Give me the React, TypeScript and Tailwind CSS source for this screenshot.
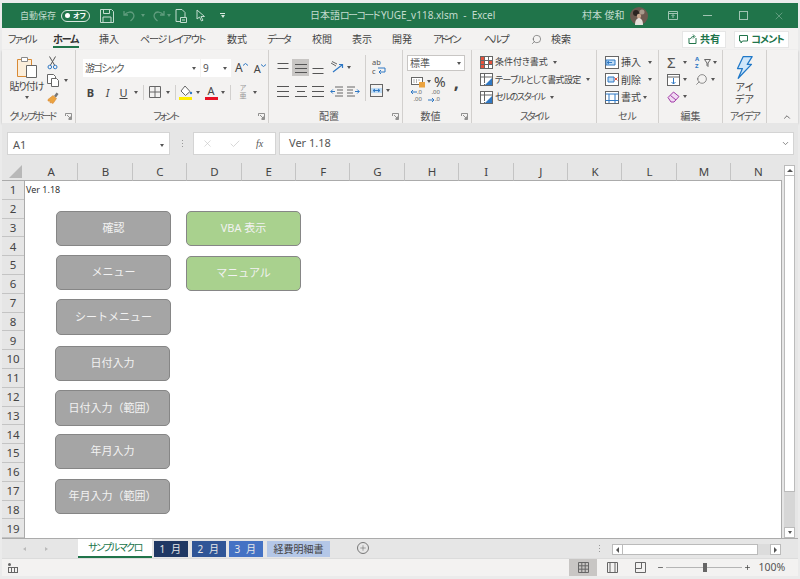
import { ChevronDown, ChevronUp, Minus, Plus, Search, X, Check } from 'lucide-react';
import type { ReactNode } from 'react';

function Caret({ className = '' }: { className?: string }) {
  return <span className={`inline-block h-0 w-0 shrink-0 border-x-[2.5px] border-t-[3px] border-x-transparent border-t-[#555] ${className}`} />;
}

function Launcher() {
  return (
    <svg width="7" height="7" viewBox="0 0 7 7" fill="none" stroke="#777" strokeWidth="0.8" className="absolute bottom-[3px] right-[3px]">
      <path d="M0.5 3V0.5H6.5V6.5H3.5M2 2 5.5 5.5M5.5 3.5V5.5H3.5" />
    </svg>
  );
}

function Group({ width, label, labelCls = '', launcher, children }: { width: string; label: string; labelCls?: string; launcher?: boolean; children: ReactNode }) {
  return (
    <div className={`relative flex h-full shrink-0 flex-col border-r border-[#d2d0ce] ${width}`}>
      <div className="relative min-h-0 flex-1">{children}</div>
      <div className={`h-[13px] whitespace-nowrap text-center text-[10px] leading-[13px] text-[#555] ${launcher ? 'pr-[13px]' : ''} ${labelCls}`}>{label}</div>
      {launcher && <Launcher />}
    </div>
  );
}

function Lines({ rows }: { rows: [number, number][] }) {
  return (
    <svg width="16" height="14" viewBox="0 0 16 14" stroke="#555" strokeWidth="1">
      {rows.map(([y, w], i) => (
        <line key={i} x1={(16 - w) / 2} x2={(16 + w) / 2} y1={y + 0.5} y2={y + 0.5} />
      ))}
    </svg>
  );
}

function Paste() {
  return (
    <svg width="22" height="22" viewBox="0 0 22 22" fill="none">
      <path d="M1.5 3.5h14v17h-14z" fill="#fbeedb" stroke="#d98a35" />
      <path d="M5.5 1.5h6v4h-6z" fill="#fff" stroke="#8a8a8a" />
      <path d="M10.5 9.5h10v12h-10z" fill="#fff" stroke="#666" />
    </svg>
  );
}

function Scissors() {
  return (
    <svg width="11" height="14" viewBox="0 0 11 14" fill="none" stroke="#555" strokeWidth="1">
      <path d="M2.5 0.5 7.5 9M8.5 0.5 3.5 9" />
      <circle cx="2.8" cy="11" r="1.8" stroke="#2f78c4" />
      <circle cx="8.2" cy="11" r="1.8" stroke="#2f78c4" />
    </svg>
  );
}

function CopyIcon() {
  return (
    <svg width="13" height="13" viewBox="0 0 13 13" fill="#fff" stroke="#666">
      <path d="M0.5 0.5h6l2 2v7h-8z" />
      <path d="M4.5 4.5h5l2 2v6h-7z" />
    </svg>
  );
}

function Brush() {
  return (
    <svg width="13" height="13" viewBox="0 0 13 13" fill="none">
      <path d="M7 5 9.5 1.5 11.5 3 9 6.5z" fill="#777" />
      <path d="M1 8.5 6 4.5l3.5 3-3.5 5-2-1-1 .5.3-1.8L1 10z" fill="#eba33f" stroke="#d98a35" strokeWidth="0.6" />
    </svg>
  );
}

function Fill() {
  return (
    <svg width="14" height="15" viewBox="0 0 14 15" fill="none">
      <path d="M6 1 11 6.5 6.5 10.5 2 6z" fill="#fff" stroke="#666" />
      <circle cx="12" cy="8" r="1.2" fill="#2f78c4" />
      <rect x="0" y="12" width="13" height="3" fill="#ffee00" />
    </svg>
  );
}

function FontColor() {
  return (
    <div className="flex h-[15px] w-[14px] flex-col items-center">
      <span className="h-[12px] text-[11px] leading-[12px] text-[#444]">A</span>
      <span className="mt-[0.5px] h-[3px] w-[13px] shrink-0 bg-[#e81123]" />
    </div>
  );
}

function BorderIcon() {
  return (
    <svg width="12" height="12" viewBox="0 0 12 12" fill="none" stroke="#666">
      <path d="M0.5 0.5h11v11h-11zM6 0.5v11M0.5 6h11" />
    </svg>
  );
}

function Orient() {
  return (
    <svg width="14" height="13" viewBox="0 0 14 13" fill="none" strokeWidth="1">
      <path d="M1 2 6 5M2 0.5 7 3" stroke="#666" />
      <path d="M3 11 12 4M9 3.5h3.5V7" stroke="#2f78c4" strokeWidth="1.2" />
    </svg>
  );
}

function Indent({ flip }: { flip?: boolean }) {
  return (
    <svg width="13" height="11" viewBox="0 0 13 11" fill="none" strokeWidth="1" className={flip ? '-scale-x-100' : ''}>
      <path d="M5 1h8M7 4h6M7 7h6M5 10h8" stroke="#666" />
      <path d="M5 5.5H0.8M2.8 3.5 0.8 5.5l2 2" stroke="#2f78c4" />
    </svg>
  );
}

function Wrap() {
  return (
    <div className="relative flex h-[18px] w-[15px] flex-col text-[7.5px] leading-[9px] text-[#555]">
      <span>ab</span>
      <span>c</span>
      <svg width="10" height="8" viewBox="0 0 10 8" fill="none" stroke="#2f78c4" className="absolute bottom-[1px] right-0">
        <path d="M1 1h7v4H2M4 3 2 5l2 2" />
      </svg>
    </div>
  );
}

function Merge() {
  return (
    <svg width="13" height="13" viewBox="0 0 13 13" fill="none">
      <rect x="0.5" y="0.5" width="12" height="12" stroke="#666" />
      <rect x="1" y="4" width="11" height="5" fill="#bfdcf5" />
      <path d="M3 6.5h7M5 5 3 6.5 5 8M8 5l2 1.5L8 8" stroke="#2f78c4" />
    </svg>
  );
}

function Accounting() {
  return (
    <svg width="15" height="12" viewBox="0 0 15 12" fill="none">
      <rect x="0.5" y="1.5" width="11" height="7" fill="#fff" stroke="#666" />
      <path d="M2.5 4h1M5 4h1M7.5 4h1M2.5 6h1M5 6h1" stroke="#666" />
      <rect x="8" y="6" width="6" height="5.5" fill="#eba33f" />
    </svg>
  );
}

function Decimal({ flip }: { flip?: boolean }) {
  return (
    <div className="relative h-[14px] w-[12px] text-right text-[6px] leading-[7px] text-[#666]">
      <div>{flip ? '.00' : '.0'}</div>
      <div>{flip ? '.0' : '.00'}</div>
      <svg width="7" height="6" viewBox="0 0 7 6" fill="none" stroke="#2f78c4" className={`absolute left-0 ${flip ? 'bottom-0' : 'top-0'}`}>
        <path d={flip ? 'M0 3h6M4 1l2 2-2 2' : 'M7 3H1M3 1 1 3l2 2'} />
      </svg>
    </div>
  );
}

function StyleIcon({ kind }: { kind: number }) {
  return (
    <svg width="13" height="13" viewBox="0 0 13 13" fill="none" className="shrink-0">
      <rect x="0.5" y="0.5" width="12" height="12" fill="#fff" stroke="#666" />
      {kind === 0 && (
        <g>
          <rect x="1" y="1" width="3.5" height="11" fill="#e5533d" />
          <rect x="8" y="4" width="4" height="4" fill="#e5533d" />
          <path d="M0.5 4.5h12M0.5 8.5h12M4.5 0.5v12M8.5 0.5v12" stroke="#666" />
        </g>
      )}
      {kind > 0 && (
        <g>
          <path d="M0.5 4h12M4.5 0.5v12" stroke="#666" />
          <path d="M5 12 12 5v7z" fill="#2f78c4" />
          <path d="M4 11 10 5" stroke="#fff" />
        </g>
      )}
    </svg>
  );
}

function CellIcon({ kind }: { kind: number }) {
  return (
    <svg width="14" height="13" viewBox="0 0 14 13" fill="none" className="shrink-0">
      <rect x="0.5" y="0.5" width="13" height="12" fill="#fff" stroke="#666" />
      {kind === 0 && <path d="M1 4h9v5H1z" fill="#bfdcf5" stroke="#2f78c4" />}
      {kind === 0 && <path d="M7 6.5H2M4 5 2 6.5 4 8" stroke="#2f78c4" />}
      {kind === 1 && <path d="M3 4h6v5H3z" fill="#bfdcf5" stroke="#2f78c4" />}
      {kind === 1 && <path d="M9.5 4.5l3 3M12.5 4.5l-3 3" stroke="#e5533d" />}
      {kind === 2 && <path d="M0.5 3h13M0.5 9.5h13M4 3v9M10 3v9" stroke="#2f78c4" />}
    </svg>
  );
}

function Bolt() {
  return (
    <svg width="17" height="23" viewBox="0 0 24 33" fill="none">
      <path d="M10 1h13l-7 11h6L3 32l6-14H2z" fill="#cfe6f9" stroke="#1f78c8" strokeWidth="1.8" strokeLinejoin="round" />
    </svg>
  );
}

function GrowShrink({ down, size }: { down?: boolean; size: string }) {
  return (
    <span className={`flex items-start text-[#444] ${size}`}>
      <span className="leading-none">A</span>
      <svg width="5" height="3" viewBox="0 0 5 3" fill="none" stroke="#2f78c4" className="mt-[1px]">
        <path d={down ? 'M0 0.5l2.5 2 2.5-2' : 'M0 2.5l2.5-2 2.5 2'} />
      </svg>
    </span>
  );
}

function Combo({ width, children }: { width: string; children: ReactNode }) {
  return (
    <div className={`flex h-[18px] items-center justify-between bg-white pl-[2px] pr-[4px] text-[10px] text-[#555] ${width}`}>
      <span>{children}</span>
      <Caret />
    </div>
  );
}

function TitleBar() {
  return (
    <div className="flex h-[25px] shrink-0 items-center bg-[#20744a] text-[10px] text-[#c3dccf]">
      <span className="ml-[18px] w-[41px] whitespace-nowrap text-[9px]">自動保存</span>
      <div className="flex h-[12px] w-[29px] items-center rounded-full border border-[#d8e8df] px-[3px]">
        <span className="h-[5px] w-[5px] rounded-full bg-white" />
        <span className="ml-[3px] whitespace-nowrap text-[7px] font-bold leading-none text-white">オフ</span>
      </div>
      <svg width="14" height="14" viewBox="0 0 14 14" fill="none" stroke="#c3dccf" className="ml-[10px]">
        <path d="M0.5 0.5h11l2 2v11h-13zM3.5 0.5v4h6v-4M3 13.5V8h8v5.5" />
      </svg>
      <svg width="16" height="12" viewBox="0 0 16 12" fill="none" stroke="#5f9c7d" strokeWidth="1.3" className="ml-[9px]">
        <path d="M1 1v4h4M1.5 5C4 1.5 9 1 10.5 4c1.3 2.5-.5 5-3 7" />
      </svg>
      <Caret className="ml-[2px] !border-t-[#5f9c7d]" />
      <svg width="16" height="12" viewBox="0 0 16 12" fill="none" stroke="#5f9c7d" strokeWidth="1.3" className="ml-[4px]">
        <path d="M15 1v4h-4M14.5 5C12 1.5 7 1 5.5 4c-1.3 2.5.5 5 3 7" />
      </svg>
      <Caret className="ml-[2px] !border-t-[#5f9c7d]" />
      <svg width="12" height="14" viewBox="0 0 12 14" fill="none" stroke="#c3dccf" className="ml-[4px]">
        <path d="M1 .5h6l3 3v5M1 .5v12h4M7 8.5h4.5v5H5.5v-5zM7 11h3" />
      </svg>
      <svg width="10" height="13" viewBox="0 0 10 13" fill="none" stroke="#c3dccf" className="ml-[9px]">
        <path d="M1 1v9l2.5-2 2 4 1.5-.8-2-3.700h3.500z" />
      </svg>
      <div className="ml-[14px] flex w-[5px] flex-col items-center gap-[1px]">
        <span className="h-[1px] w-[5px] bg-[#d8e8df]" />
        <Caret className="!border-t-[#d8e8df]" />
      </div>
      <span className="ml-[85px] w-[272px] whitespace-nowrap">
        <span>日本語</span>
        <span className="tracking-[-1.6px]">ローコード</span>
        <span className="ml-[2px]">YUGE_v118.xlsm&nbsp; -&nbsp; Excel</span>
      </span>
      <span className="w-[48px] whitespace-nowrap">村本 俊和</span>
      <svg width="18" height="18" viewBox="0 0 18 18" className="shrink-0">
        <circle cx="9" cy="9" r="9" fill="#6b5a4f" />
        <circle cx="6" cy="6" r="3" fill="#2b2420" />
        <circle cx="12" cy="5" r="2.5" fill="#a89a8b" />
        <path d="M5 18c0-5 2-7 4-7s4 2 4 7z" fill="#e4e0da" />
        <circle cx="9" cy="9" r="2.2" fill="#c7a58d" />
      </svg>
      <svg width="10" height="9" viewBox="0 0 10 9" fill="none" stroke="#a0c4b2" className="ml-[20px]">
        <path d="M.5 .5h9v8h-9zM.5 2.5h9M5 7V4M3.5 5 5 3.5 6.5 5" />
      </svg>
      <span className="ml-[25px] h-[1px] w-[9px] bg-[#a0c4b2]" />
      <span className="ml-[27px] h-[9px] w-[9px] border border-[#a0c4b2]" />
      <X size={12} strokeWidth={1} className="ml-[25px] text-[#a0c4b2]" />
    </div>
  );
}

const tabs = [
  { label: 'ファイル', cls: 'w-[45px] tracking-[-1.7px]' },
  { label: 'ホーム', cls: 'w-[46px] font-bold text-[#333] tracking-[-1px]' },
  { label: '挿入', cls: 'w-[41px]' },
  { label: 'ページ レイアウト', cls: 'w-[87px] tracking-[-1.2px]' },
  { label: '数式', cls: 'w-[40px]' },
  { label: 'データ', cls: 'w-[45px] tracking-[-1.6px]' },
  { label: '校閲', cls: 'w-[40px]' },
  { label: '表示', cls: 'w-[40px]' },
  { label: '開発', cls: 'w-[41px]' },
  { label: 'アドイン', cls: 'w-[51px] tracking-[-2.2px]' },
  { label: 'ヘルプ', cls: 'w-[47px] tracking-[-1.6px]' },
];

function TabRow() {
  return (
    <div className="flex h-[22px] shrink-0 items-center bg-[#f3f2f1] pl-[6px] text-[10px] text-[#444]">
      {tabs.map((t) => (
        <div key={t.label} className={`relative flex h-full items-center whitespace-nowrap ${t.cls}`}>
          {t.label}
          {t.label === 'ホーム' && <span className="absolute bottom-[2px] left-0 h-[2px] w-[26px] bg-[#20744a]" />}
        </div>
      ))}
      <Search size={11} strokeWidth={1.3} className="-scale-x-100 text-[#555]" />
      <span className="ml-[9px] w-[20px]">検索</span>
      <div className="ml-[111px] flex h-[17px] w-[44px] items-center justify-center gap-[3px] border border-[#e6e6e6] bg-white font-bold text-[#20744a]">
        <svg width="9" height="10" viewBox="0 0 9 10" fill="none" stroke="#666">
          <path d="M1 4v5.5h7V4M2.5 5C3 3 4.5 2.5 6 2.5M5 .5l2 2-2 2" stroke="#20744a" />
        </svg>
        共有
      </div>
      <div className="ml-[8px] flex h-[17px] w-[55px] items-center justify-center gap-[3px] border border-[#e6e6e6] bg-white font-bold tracking-[-1px] text-[#20744a]">
        <svg width="9" height="9" viewBox="0 0 9 9" fill="none" stroke="#20744a">
          <path d="M.5 .5h8v5.5h-5l-1.5 2V6h-1.5z" />
        </svg>
        コメント
      </div>
    </div>
  );
}

const styleItems = [
  { label: '条件付き書式', cls: 'text-[9px]' },
  { label: 'テーブルとして書式設定', cls: 'text-[9px] tracking-[-0.6px]' },
  { label: 'セルのスタイル', cls: 'text-[9px] tracking-[-1.2px]' },
];

function Ribbon() {
  return (
    <div className="flex h-[73px] shrink-0 bg-[#f3f2f1] text-[#555] shadow-[0_1px_2px_#bbb]">
      <Group width="w-[74px]" label="クリップボード" labelCls="tracking-[-2.3px]" launcher>
        <div className="flex">
          <div className="ml-[4px] flex w-[41px] flex-col items-center pt-[6px]">
            <Paste />
            <span className="mt-[2px] whitespace-nowrap text-[10px] leading-[12px] tracking-[-1px] text-[#444]">貼り付け</span>
            <Caret className="mt-[4px]" />
          </div>
          <div className="flex flex-col gap-[4px] pt-[6px]">
            <Scissors />
            <div className="flex items-center gap-[4px]">
              <CopyIcon />
              <Caret />
            </div>
            <Brush />
          </div>
        </div>
      </Group>

      <Group width="w-[193px]" label="フォント" labelCls="tracking-[-2px]" launcher>
        <div className="flex items-center pl-[7px] pt-[9px]">
          <Combo width="w-[117px] tracking-[-1.5px]">游ゴシック</Combo>
          <Combo width="ml-[1px] w-[30px]">9</Combo>
          <span className="ml-[4px]"><GrowShrink size="text-[12px]" /></span>
          <span className="ml-[6px]"><GrowShrink down size="text-[11px]" /></span>
        </div>
        <div className="flex items-center pl-[6px] pt-[7px] text-[11px] leading-none text-[#444]">
          <span className="w-[17px] text-center font-bold">B</span>
          <span className="w-[17px] text-center italic">I</span>
          <span className="w-[15px] text-center underline">U</span>
          <Caret className="ml-[3px]" />
          <span className="mx-[5px] h-[15px] w-px bg-[#d2d0ce]" />
          <BorderIcon />
          <Caret className="ml-[5px]" />
          <span className="ml-[5px] mr-[3px] h-[15px] w-px bg-[#d2d0ce]" />
          <Fill />
          <Caret className="ml-[3px]" />
          <span className="w-[4px]" />
          <FontColor />
          <Caret className="ml-[3px]" />
          <span className="mx-[5px] h-[15px] w-px bg-[#d2d0ce]" />
          <span className="flex w-[14px] flex-col items-center text-[7px] leading-[8px] text-[#999]">
            <span>ア</span>
            <span>亜</span>
          </span>
          <Caret className="ml-[3px]" />
        </div>
      </Group>

      <Group width="w-[134px]" label="配置" launcher>
        <div className="flex h-full pl-[5px]">
          <div className="w-[91px]">
            <div className="flex items-center pt-[9px]">
              <span className="flex h-[17px] w-[18px] items-center justify-center"><Lines rows={[[2, 11], [7, 11]]} /></span>
              <span className="flex h-[17px] w-[17px] items-center justify-center bg-[#c8c6c4]"><Lines rows={[[3, 12], [7, 12], [11, 12]]} /></span>
              <span className="flex h-[17px] w-[18px] items-center justify-center"><Lines rows={[[7, 11], [12, 11]]} /></span>
              <span className="ml-[3px] flex items-center gap-[3px]"><Orient /><Caret /></span>
            </div>
            <div className="mt-[8px] flex h-[14px] items-center">
              <span className="flex w-[18px] justify-center"><Lines rows={[[2, 12], [7, 12], [12, 12]]} /></span>
              <span className="flex w-[17px] justify-center"><Lines rows={[[2, 12], [7, 8], [12, 12]]} /></span>
              <span className="flex w-[18px] justify-center"><Lines rows={[[2, 12], [7, 12], [12, 12]]} /></span>
              <span className="ml-[3px]"><Indent /></span>
              <span className="ml-[4px]"><Indent flip /></span>
            </div>
          </div>
          <span className="mt-[5px] h-[46px] w-px bg-[#d2d0ce]" />
          <div className="pl-[4px] pt-[8px]">
            <span className="ml-[2px] block"><Wrap /></span>
            <span className="mt-[8px] flex items-center gap-[3px]"><Merge /><Caret /></span>
          </div>
        </div>
      </Group>

      <Group width="w-[69px]" label="数値" launcher>
        <div className="pl-[4px] pt-[5px]">
          <div className="flex h-[16px] w-[58px] items-center justify-between border border-[#c8c6c4] bg-white pl-[2px] pr-[3px] text-[10px]">
            標準
            <Caret />
          </div>
          <div className="flex h-[18px] items-center pl-[4px] pt-[3px]">
            <Accounting />
            <Caret className="ml-[1px]" />
            <span className="ml-[3px] text-[14px] leading-[18px] text-[#444]">%</span>
            <span className="ml-[8px] text-[18px] font-bold leading-[14px] text-[#444]">,</span>
          </div>
          <div className="flex gap-[6px] pl-[3px]">
            <Decimal />
            <Decimal flip />
          </div>
        </div>
      </Group>

      <Group width="w-[125px]" label="スタイル" labelCls="tracking-[-2px]">
        <div className="flex flex-col gap-[3.5px] pl-[8px] pt-[5px] leading-[14px] text-[#444]">
          {styleItems.map((s, i) => (
            <div key={s.label} className={`flex items-center gap-[2px] whitespace-nowrap ${s.cls}`}>
              <StyleIcon kind={i} />
              {s.label}
              <Caret className="ml-[3px]" />
            </div>
          ))}
        </div>
      </Group>

      <Group width="w-[62px]" label="セル">
        <div className="flex flex-col gap-[3.5px] pl-[8px] pt-[5px] text-[10px] leading-[14px] text-[#444]">
          {['挿入', '削除', '書式'].map((s, i) => (
            <div key={s} className="flex items-center gap-[2px]">
              <CellIcon kind={i} />
              {s}
              <Caret className={i === 2 ? 'ml-0' : 'ml-[5px]'} />
            </div>
          ))}
        </div>
      </Group>

      <Group width="w-[64px]" label="編集">
        <div className="grid grid-cols-[28px_30px] gap-y-[4px] pl-[8px] pt-[6px] text-[#555]">
          <div className="flex h-[13px] items-center gap-[3px]"><span className="w-[13px] text-[15px] leading-[13px]">Σ</span><Caret /></div>
          <div className="flex h-[13px] items-center gap-[2px]">
            <span className="flex w-[7px] flex-col text-[6px] font-bold leading-[7px] text-[#2f78c4]">
              <span>A</span>
              <span>Z</span>
            </span>
            <svg width="7" height="8" viewBox="0 0 7 8" fill="none" stroke="#666"><path d="M.5 .5h6L4 4v3.5L3 6.5V4z" /></svg>
            <Caret />
          </div>
          <div className="flex h-[13px] items-center gap-[3px]">
            <svg width="13" height="12" viewBox="0 0 13 12" fill="none"><rect x=".5" y=".5" width="12" height="11" fill="#fff" stroke="#666" /><path d="M.5 3h12" stroke="#666" /><path d="M6.5 4v6M4.5 8l2 2 2-2" stroke="#2f78c4" /></svg>
            <Caret />
          </div>
          <div className="flex h-[13px] items-center gap-[3px]">
            <Search size={13} strokeWidth={1.2} className="-scale-x-100" />
            <Caret />
          </div>
          <div className="flex h-[13px] items-center gap-[3px]">
            <svg width="13" height="12" viewBox="0 0 13 12" fill="none"><path d="M1 6.5 6.5 1 12 5.5 7 11H4z" fill="#f0d9f2" stroke="#a23aa8" /><path d="M3.5 4.5 9 9" stroke="#a23aa8" /></svg>
            <Caret />
          </div>
        </div>
      </Group>

      <Group width="w-[44px]" label="アイデア" labelCls="tracking-[-1.8px]">
        <div className="flex flex-col items-center pt-[6px] text-[10px] leading-[12px] text-[#444]">
          <Bolt />
          <span className="mt-[2px]">アイ</span>
          <span>デア</span>
        </div>
      </Group>

      <div className="flex flex-1 items-end justify-end pb-[1px] pr-[6px]">
        <ChevronUp size={10} strokeWidth={2} className="text-[#555]" />
      </div>
    </div>
  );
}

function FormulaBar() {
  return (
    <div className="flex h-[40px] shrink-0 items-center bg-[#e6e6e6] pl-[5px] pr-[4px] pt-[1px] text-[#555]">
      <div className="flex h-[23px] w-[163px] items-center justify-between border border-[#d4d4d4] bg-white pl-[5px] pr-[5px] pt-[4px] text-[11px]">
        A1
        <Caret />
      </div>
      <div className="ml-[12px] flex w-[11px] flex-col gap-[2px]">
        <span className="h-[1px] w-[1px] bg-[#999]" />
        <span className="h-[1px] w-[1px] bg-[#999]" />
        <span className="h-[1px] w-[1px] bg-[#999]" />
      </div>
      <div className="flex h-[23px] w-[83px] items-center border border-[#d4d4d4] bg-white pl-[8px] text-[#c3c3c3]">
        <X size={11} strokeWidth={1.3} />
        <Check size={12} strokeWidth={1.3} className="ml-[16px]" />
        <span className="ml-[15px] text-[10px] italic text-[#555] [font-family:'Liberation_Serif',serif]">fx</span>
      </div>
      <div className="ml-[3px] flex h-[23px] flex-1 items-center justify-between border border-[#d4d4d4] bg-white pl-[9px] pr-[3px] text-[11px]">
        Ver 1.18
        <ChevronDown size={9} strokeWidth={2} className="text-[#666]" />
      </div>
    </div>
  );
}

const columns = ['A', 'B', 'C', 'D', 'E', 'F', 'G', 'H', 'I', 'J', 'K', 'L', 'M', 'N'];
const rows = Array.from({ length: 19 }, (_, i) => i + 1);

const shapes = [
  { label: '確認', cls: 'left-[31px] top-[30px] h-[35px] w-[115px] bg-[#a5a5a5]' },
  { label: 'メニュー', cls: 'left-[31px] top-[74px] h-[35px] w-[115px] bg-[#a5a5a5]' },
  { label: 'シートメニュー', cls: 'left-[31px] top-[118px] h-[36px] w-[115px] bg-[#a5a5a5]' },
  { label: '日付入力', cls: 'left-[30px] top-[165px] h-[35px] w-[115px] bg-[#a5a5a5]' },
  { label: '日付入力（範囲）', cls: 'left-[30px] top-[209px] h-[36px] w-[115px] bg-[#a5a5a5]' },
  { label: '年月入力', cls: 'left-[30px] top-[253px] h-[35px] w-[115px] bg-[#a5a5a5]' },
  { label: '年月入力（範囲）', cls: 'left-[30px] top-[298px] h-[35px] w-[115px] bg-[#a5a5a5]' },
  { label: 'VBA 表示', cls: 'left-[161px] top-[30px] h-[35px] w-[115px] bg-[#a9d18e]' },
  { label: 'マニュアル', cls: 'left-[161px] top-[75px] h-[35px] w-[115px] bg-[#a9d18e]' },
];

function Sheet() {
  return (
    <div className="flex min-h-0 w-[780px] shrink-0 flex-col">
      <div className="flex h-[18px] shrink-0 overflow-hidden bg-[#e6e6e6] text-[11.5px] text-[#444]">
        <div className="relative w-[22px] shrink-0 border-b border-[#ababab]">
          <span className="absolute bottom-[2px] right-[2px] h-0 w-0 border-b-[13px] border-l-[13px] border-b-[#b8b8b8] border-l-transparent" />
        </div>
        {columns.map((c) => (
          <div key={c} className="flex w-[54.4px] shrink-0 items-center justify-center border-b border-r border-b-[#ababab] border-r-[#c4c4c4] pl-px">
            {c}
          </div>
        ))}
      </div>
      <div className="flex min-h-0 flex-1">
        <div className="w-[22px] shrink-0 overflow-hidden bg-[#e6e6e6] text-[11.5px] text-[#444]">
          {rows.map((r) => (
            <div key={r} className="flex h-[18.8px] items-center justify-center border-b border-[#c4c4c4]">
              {r}
            </div>
          ))}
        </div>
        <div className="relative flex-1 overflow-hidden border-x border-[#ababab] bg-white">
          <div className="pl-[1px] pt-[3px] text-[9px] leading-[12px] text-[#333]">Ver 1.18</div>
          {shapes.map((s) => (
            <div key={s.label} className={`absolute flex items-center justify-center rounded-[5px] border border-[#868686] text-[11px] text-[#f2f2f2] [font-feature-settings:normal] ${s.cls}`}>
              {s.label}
            </div>
          ))}
        </div>
      </div>
    </div>
  );
}

function VScroll() {
  return (
    <div className="flex flex-1 flex-col bg-[#e6e6e6] pl-[2px] pr-[3px] pt-[2px]">
      <div className="flex h-[11px] items-center justify-center border border-[#bbb] bg-white">
        <span className="h-0 w-0 border-x-[3px] border-b-[3px] border-x-transparent border-b-[#555]" />
      </div>
      <div className="h-[316px] border-x border-b border-[#bbb] bg-white" />
      <div className="flex-1 bg-[#d6d6d6]" />
      <div className="flex h-[11px] items-center justify-center border border-[#bbb] bg-white">
        <Caret />
      </div>
    </div>
  );
}

function SheetTabs() {
  const tabCls = 'mt-[2px] flex h-[16px] items-center justify-center whitespace-nowrap text-[10px]';
  return (
    <div className="flex h-[20px] shrink-0 items-start border-t border-[#ababab] bg-[#e6e6e6] text-[#555]">
      <div className="flex h-full w-[76px] items-center pl-[21px] text-[#bbb]">
        <span className="h-0 w-0 border-y-[2.5px] border-r-[3px] border-y-transparent border-r-[#bbb]" />
        <span className="ml-[19px] h-0 w-0 border-y-[2.5px] border-l-[3px] border-y-transparent border-l-[#bbb]" />
      </div>
      <div className="flex h-[19px] w-[74px] items-center justify-center border-b-2 border-[#20744a] bg-white text-[10px] tracking-[-1.5px] text-[#20744a]">サンプルマクロ</div>
      <div className={`ml-[2px] w-[34px] bg-[#1f3864] tracking-[1.5px] text-[#e8e8e8] ${tabCls}`}>1 月</div>
      <div className={`ml-[4px] w-[34px] bg-[#2f5597] tracking-[1.5px] text-[#e8e8e8] ${tabCls}`}>2 月</div>
      <div className={`ml-[3px] w-[34px] bg-[#4472c4] tracking-[1.5px] text-[#e8e8e8] ${tabCls}`}>3 月</div>
      <div className={`ml-[4px] w-[63px] bg-[#b4c7e7] text-[#444] ${tabCls}`}>経費明細書</div>
      <div className="ml-[27px] mt-[3px] flex h-[12px] w-[12px] items-center justify-center rounded-full border border-[#777]">
        <Plus size={8} strokeWidth={1.5} />
      </div>
      <div className="ml-[230px] mt-[6px] flex w-[2px] flex-col gap-[2px]">
        <span className="h-[1px] w-[1px] bg-[#999]" />
        <span className="h-[1px] w-[1px] bg-[#999]" />
        <span className="h-[1px] w-[1px] bg-[#999]" />
      </div>
      <div className="ml-[11px] mt-[5px] flex h-[11px] w-[169px] bg-[#dcdcdc]">
        <div className="flex w-[11px] items-center justify-center border border-[#bbb] bg-white">
          <span className="h-0 w-0 border-y-[3px] border-r-[3px] border-y-transparent border-r-[#555]" />
        </div>
        <div className="w-[135px] border-y border-r border-[#bbb] bg-white" />
        <div className="flex-1" />
        <div className="flex w-[11px] items-center justify-center border border-[#bbb] bg-white">
          <span className="h-0 w-0 border-y-[3px] border-l-[3px] border-y-transparent border-l-[#555]" />
        </div>
      </div>
    </div>
  );
}

function StatusBar() {
  return (
    <div className="flex h-[18px] shrink-0 items-center border-t border-[#dcdcdc] bg-[#f3f2f1] text-[#666]">
      <svg width="10" height="10" viewBox="0 0 10 10" fill="#666" className="ml-[6px]">
        <circle cx="1.5" cy="1.5" r="1.5" />
        <path d="M0 4h10v6H0zM1 5v4h2V5zM4 5v4h2V5zM7 5v4h2V5z" fillRule="evenodd" />
      </svg>
      <div className="ml-[551px] flex h-full w-[28px] items-center justify-center bg-[#c8c6c4]">
        <svg width="11" height="11" viewBox="0 0 11 11" fill="none" stroke="#666">
          <path d="M.5 .5h10v10H.5zM3.8 .5v10M7.2 .5v10M.5 3.8h10M.5 7.2h10" />
        </svg>
      </div>
      <svg width="11" height="11" viewBox="0 0 11 11" fill="none" stroke="#666" className="ml-[10px]">
        <path d="M.5 .5h10v10H.5zM3 .5v10M8 .5v10" />
      </svg>
      <svg width="11" height="11" viewBox="0 0 11 11" fill="none" stroke="#666" className="ml-[17px]">
        <path d="M.5 .5h10v10H.5zM.5 6.5h6V.5" />
      </svg>
      <Minus size={7} strokeWidth={2.5} className="ml-[11px] text-[#444]" />
      <div className="relative ml-[2px] h-px w-[76px] bg-[#b5b5b5]">
        <span className="absolute -top-[4px] left-[37px] h-[9px] w-[4px] bg-[#666]" />
      </div>
      <Plus size={7} strokeWidth={2.5} className="ml-[1.5px] text-[#444]" />
      <span className="ml-[8px] text-[10.5px] text-[#555]">100%</span>
    </div>
  );
}

export default function App() {
  return (
    <div className="h-[579px] w-[800px] overflow-hidden bg-[#ebebeb] px-[2px] pb-[3px] pt-[3px] [font-family:'Noto_Sans','Noto_Sans_CJK_JP',sans-serif] [font-feature-settings:'palt']">
      <div className="flex h-full flex-col">
        <TitleBar />
        <TabRow />
        <Ribbon />
        <FormulaBar />
        <div className="flex min-h-0 flex-1 flex-col">
          <div className="flex min-h-0 flex-1">
            <Sheet />
            <VScroll />
          </div>
          <SheetTabs />
          <StatusBar />
        </div>
      </div>
    </div>
  );
}
